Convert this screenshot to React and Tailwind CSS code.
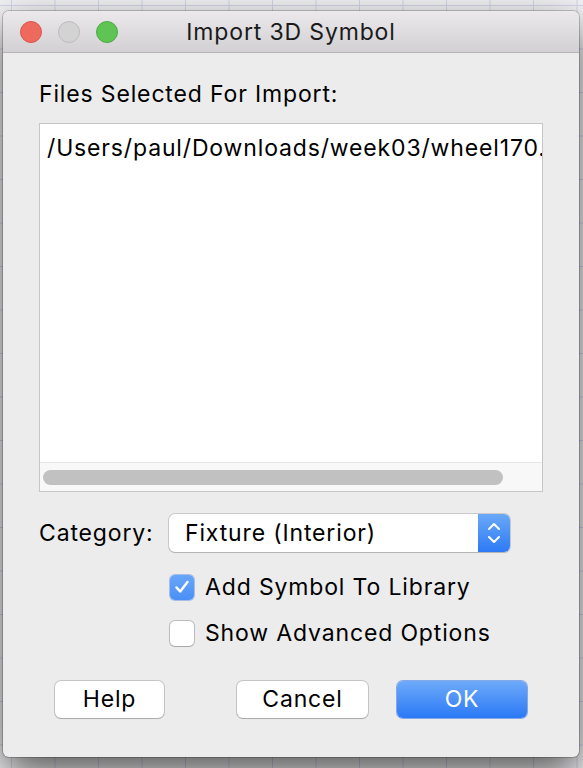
import React from "react";

const font = { fontFamily: 'Inter, "Liberation Sans", Arial, sans-serif' };

function Check() {
  return (
    <svg width="18" height="18" viewBox="0 0 18 18" fill="none">
      <path d="M3.5 9.5 L7.2 13.5 L14.5 4" stroke="white" strokeWidth="2.5" strokeLinecap="round" strokeLinejoin="round" />
    </svg>
  );
}

function Stepper() {
  return (
    <svg width="14" height="26" viewBox="0 0 14 26" fill="none">
      <path d="M2 9 L7 4 L12 9" stroke="white" strokeWidth="2" strokeLinecap="round" strokeLinejoin="round" />
      <path d="M2 17 L7 22 L12 17" stroke="white" strokeWidth="2" strokeLinecap="round" strokeLinejoin="round" />
    </svg>
  );
}

export default function App() {
  return (
    <div
      className="w-[583px] h-[768px] overflow-hidden bg-[#f3f3f5] bg-[linear-gradient(to_right,#d4d4ee_1px,transparent_1px),linear-gradient(to_bottom,#d4d4ee_1px,transparent_1px)] bg-size-[43.5px_43.5px] bg-position-[11px_5px] pt-[11px] px-[3px] text-black text-[23px] tracking-[0.85px]"
      style={font}
    >
      <div className="relative w-[576px] h-[746px] rounded-[6px] bg-[#ececec] flex flex-col shadow-[0_16px_40px_rgba(0,0,0,0.65),0_0_0_1px_rgba(0,0,0,0.2)] overflow-hidden">
        {/* Title bar */}
        <div className="h-[42px] shrink-0 flex items-center relative bg-[linear-gradient(to_bottom,#ebe9eb,#d2d0d2)] border-b border-[#b5b3b5]">
          <div className="flex items-center gap-[16px] pl-[17px]">
            <div className="w-[22px] h-[22px] rounded-full bg-[#ee6a5f] border border-[#d9544a]" />
            <div className="w-[22px] h-[22px] rounded-full bg-[#d4d3d4] border border-[#bdbcbd]" />
            <div className="w-[22px] h-[22px] rounded-full bg-[#5fc453] border border-[#4aab3f]" />
          </div>
          <div className="absolute inset-0 flex items-center justify-center text-[#1a1a1a] pt-[1px]">
            Import 3D Symbol
          </div>
        </div>

        {/* Body */}
        <div className="flex flex-col pl-[36px]">
          <div className="mt-[29px] h-[24px] leading-[24px]">Files Selected For Import:</div>

          <div className="mt-[17px] w-[504px] h-[369px] bg-white border border-[#c6c6c6] flex flex-col">
            <div className="flex-1 overflow-hidden pl-[7px] pt-[11px]">
              <div className="whitespace-nowrap leading-[26px]">/Users/paul/Downloads/week03/wheel170.</div>
            </div>
            <div className="h-[29px] shrink-0 bg-[#f8f8f8] border-t border-[#e6e6e6] flex items-center pl-[3px]">
              <div className="w-[460px] h-[15px] rounded-full bg-[#c1c1c1]" />
            </div>
          </div>

          <div className="mt-[22px] h-[38px] flex items-center">
            <div className="w-[130px]">Category:</div>
            <div className="w-[341px] h-[38px] rounded-[6px] bg-white shadow-[0_0_0_1px_rgba(0,0,0,0.14),0_1px_1px_rgba(0,0,0,0.12)] flex items-center overflow-hidden">
              <div className="flex-1 pl-[16px]">Fixture (Interior)</div>
              <div className="w-[32px] h-full bg-[linear-gradient(to_bottom,#6aa8f8,#2d7af5)] flex items-center justify-center">
                <Stepper />
              </div>
            </div>
          </div>

          <div className="mt-[22px] h-[26px] flex items-center pl-[131px]">
            <div className="w-[24px] h-[25px] rounded-[5px] bg-[linear-gradient(to_bottom,#68a6f8,#4a8ff6)] shadow-[0_0_0_1px_rgba(40,100,220,0.35)] flex items-center justify-center">
              <Check />
            </div>
            <div className="ml-[11px]">Add Symbol To Library</div>
          </div>

          <div className="mt-[20px] h-[26px] flex items-center pl-[131px]">
            <div className="w-[24px] h-[25px] rounded-[5px] bg-white shadow-[0_0_0_1px_rgba(0,0,0,0.2),0_1px_1px_rgba(0,0,0,0.1)]" />
            <div className="ml-[11px]">Show Advanced Options</div>
          </div>

          <div className="mt-[35px] flex items-center">
            <button className="ml-[16px] w-[109px] h-[37px] rounded-[6px] bg-white shadow-[0_0_0_1px_rgba(0,0,0,0.16),0_1px_1px_rgba(0,0,0,0.14)] flex items-center justify-center">
              Help
            </button>
            <button className="ml-[73px] w-[131px] h-[37px] rounded-[6px] bg-white shadow-[0_0_0_1px_rgba(0,0,0,0.16),0_1px_1px_rgba(0,0,0,0.14)] flex items-center justify-center">
              Cancel
            </button>
            <button className="ml-[29px] w-[130px] h-[37px] rounded-[6px] bg-[linear-gradient(to_bottom,#6eaaf9,#2a79f6)] shadow-[0_0_0_1px_rgba(30,100,230,0.5)] text-white flex items-center justify-center">
              OK
            </button>
          </div>
        </div>
      </div>
    </div>
  );
}
